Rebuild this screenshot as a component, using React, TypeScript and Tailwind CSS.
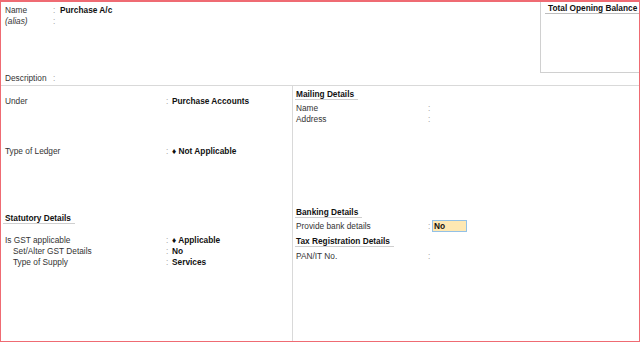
import React from "react";

const font = { fontFamily: '"Liberation Sans", Arial, sans-serif' };

function Row({ label, value, labelW, indent = false, colonClass = "w-[6px]" }: { label: string; value?: React.ReactNode; labelW: string; indent?: boolean; colonClass?: string }) {
  return (
    <div className="flex h-[11px] items-center leading-[11px]">
      <div className={`${labelW} shrink-0 text-[#333] ${indent ? "pl-[8px]" : ""}`}>{label}</div>
      <div className={`${colonClass} shrink-0 text-[#a8a8a8]`}>:</div>
      {value !== undefined && <div className="font-bold text-[#111]">{value}</div>}
    </div>
  );
}

export default function App() {
  return (
    <div
      style={font}
      className="flex h-[342px] w-[640px] flex-col overflow-hidden border-t-2 border-r border-b border-l border-[#ef6b73] bg-white text-[8.3px]"
    >
      {/* Top section */}
      <div className="flex h-[84px] shrink-0 border-b border-[#d9d9d9]">
        <div className="flex flex-1 flex-col pl-[4px] pt-[3px] pb-[1px]">
          <Row label="Name" labelW="w-[48px]" value="Purchase A/c" colonClass="w-[7px]" />
          <div className="flex h-[11px] items-center leading-[11px]">
            <div className="w-[48px] shrink-0 italic text-[#333]">(alias)</div>
            <div className="w-[7px] shrink-0 text-[#a8a8a8]">:</div>
          </div>
          <div className="mt-auto flex h-[11px] items-center leading-[11px]">
            <div className="w-[48px] shrink-0 text-[#333]">Description</div>
            <div className="w-[7px] shrink-0 text-[#a8a8a8]">:</div>
          </div>
        </div>
        <div className="h-[71px] w-[99px] shrink-0 overflow-hidden border-b border-l border-[#d0d0d0] pl-[4px]">
          <div className="inline-block whitespace-nowrap border-b border-[#bdbdbd] pl-[3px] pr-[4px] font-bold leading-[10px] text-[#111]">
            Total Opening Balance
          </div>
        </div>
      </div>

      {/* Bottom section */}
      <div className="flex flex-1">
        <div className="flex w-[292px] shrink-0 flex-col border-r border-[#d9d9d9] pl-[4px]">
          <div className="mt-[10px]">
            <Row label="Under" labelW="w-[161px]" value="Purchase Accounts" />
          </div>
          <div className="mt-[39px]">
            <Row label="Type of Ledger" labelW="w-[161px]" value={<span>♦ Not Applicable</span>} />
          </div>
          <div className="mt-[55px] -ml-[2px]">
            <div className="inline-block border-b border-[#cfcfcf] pl-[2px] pr-[4px] font-bold leading-[10px] text-[#111]">
              Statutory Details
            </div>
          </div>
          <div className="mt-[11px]">
            <Row label="Is GST applicable" labelW="w-[161px]" value={<span>♦ Applicable</span>} />
            <Row label="Set/Alter GST Details" labelW="w-[161px]" indent value="No" />
            <Row label="Type of Supply" labelW="w-[161px]" indent value="Services" />
          </div>
        </div>

        <div className="flex flex-1 flex-col pl-[2px]">
          <div className="mt-[2px]">
            <div className="inline-block border-b border-[#cfcfcf] pl-[1px] pr-[4px] font-bold leading-[9px] text-[#111]">
              Mailing Details
            </div>
          </div>
          <div className="mt-[3px] pl-[1px]">
            <Row label="Name" labelW="w-[132px]" />
            <Row label="Address" labelW="w-[132px]" />
          </div>
          <div className="mt-[81px]">
            <div className="inline-block border-b border-[#cfcfcf] pl-[1px] pr-[4px] font-bold leading-[9px] text-[#111]">
              Banking Details
            </div>
          </div>
          <div className="mt-[1px] flex h-[12px] items-center pl-[1px]">
            <div className="w-[132px] shrink-0 text-[#333]">Provide bank details</div>
            <div className="w-[4px] shrink-0 text-[#a8a8a8]">:</div>
            <div className="flex h-[12px] w-[35px] items-center border border-[#93c1e6] bg-[#fee8b2] pl-[1px] font-bold text-[#111]">
              No
            </div>
          </div>
          <div className="mt-[3px]">
            <div className="inline-block border-b border-[#cfcfcf] pl-[1px] pr-[4px] font-bold leading-[9px] text-[#111]">
              Tax Registration Details
            </div>
          </div>
          <div className="mt-[4px] pl-[1px]">
            <Row label="PAN/IT No." labelW="w-[132px]" />
          </div>
        </div>
      </div>
    </div>
  );
}
